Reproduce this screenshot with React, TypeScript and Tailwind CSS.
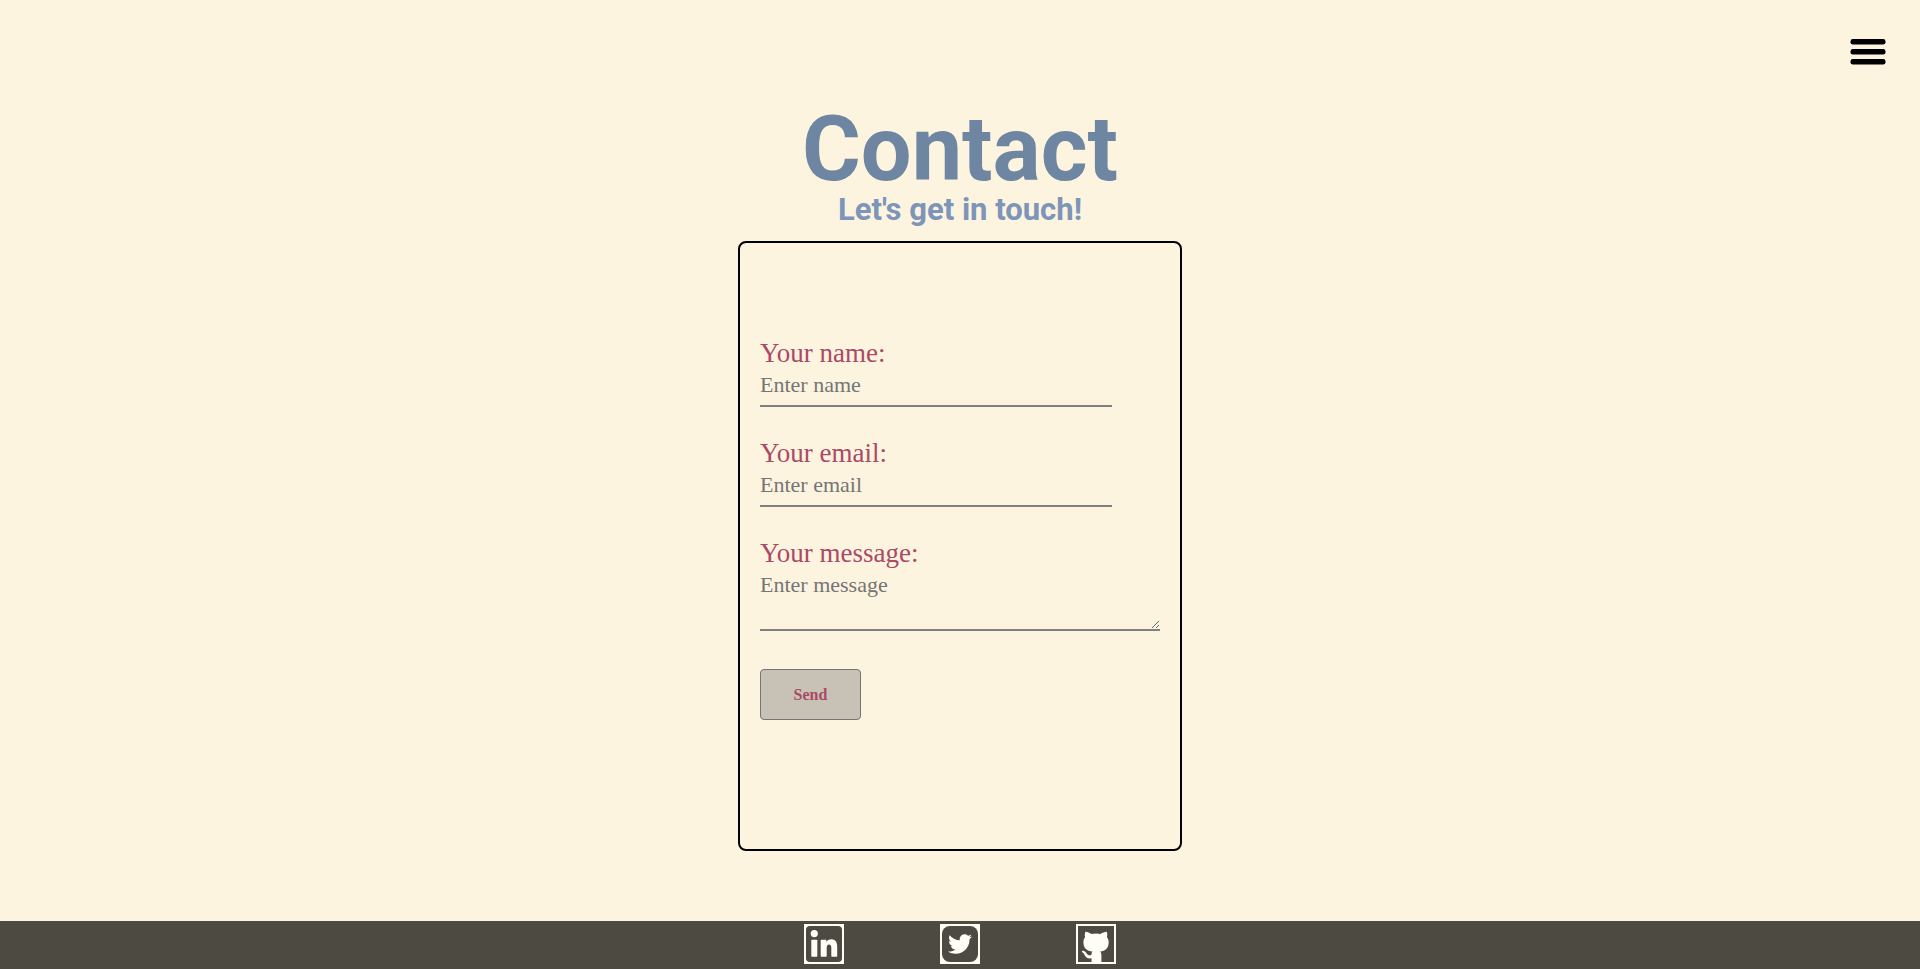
import type { ReactNode } from "react";
import { FaTwitter } from "react-icons/fa";

const serif = "font-['Liberation_Serif',serif]";
const fieldStyle =
  "block border-b-2 border-[#808080] bg-transparent text-[22px] text-[#444] placeholder:text-[#757575] outline-none";
const labelStyle = "text-[27px] leading-8 text-[#aa4a65]";

function SocialLink({ label, href, radius, children }: { label: string; href: string; radius: string; children: ReactNode }) {
  return (
    <a href={href} aria-label={label} className="block size-10 bg-[#fffdf5] p-0.5">
      <span className={`flex size-full items-center justify-center bg-[#4d4a42] text-[#fffdf5] ${radius}`}>{children}</span>
    </a>
  );
}

export default function App() {
  return (
    <div className="flex min-h-screen flex-col bg-[#fdf4e0]">
      <header className="flex justify-end px-8 pt-8">
        <button type="button" aria-label="Open menu" className="flex h-10 w-10 items-center justify-center">
          <svg width="36" height="26" viewBox="0 0 36 26" aria-hidden="true">
            <rect x="0.5" y="0" width="35" height="5.6" rx="2.4" />
            <rect x="0.5" y="10" width="35" height="5.6" rx="2.4" />
            <rect x="0.5" y="20" width="35" height="5.6" rx="2.4" />
          </svg>
        </button>
      </header>
      <main className="flex flex-1 flex-col items-center pt-[34px] font-[Roboto,sans-serif] font-bold">
        <h1 className="text-[90px] leading-[88px] text-[#6f86a3]">Contact</h1>
        <h2 className="text-[31px] leading-8 text-[#7d95b9]">Let's get in touch!</h2>
        <form
          onSubmit={(e) => e.preventDefault()}
          className={`mt-[15px] mb-[70px] flex w-full max-w-[444px] flex-1 flex-col items-start gap-[30px] rounded-lg border-2 border-black px-5 pt-[94px] pb-12 font-normal ${serif}`}
        >
          <div className="w-full">
            <label htmlFor="name" className={`block ${labelStyle}`}>Your name:</label>
            <input id="name" type="text" placeholder="Enter name" className={`${fieldStyle} h-[38px] w-[88%] pb-1`} />
          </div>
          <div className="w-full">
            <label htmlFor="email" className={`block ${labelStyle}`}>Your email:</label>
            <input id="email" type="email" placeholder="Enter email" className={`${fieldStyle} h-[38px] w-[88%] pb-1`} />
          </div>
          <div className="w-full">
            <label htmlFor="message" className={`block ${labelStyle}`}>Your message:</label>
            <textarea id="message" placeholder="Enter message" className={`${fieldStyle} h-[62px] w-full resize pt-0.5 leading-7`} />
          </div>
          <button
            type="submit"
            className="mt-2 h-[51px] w-[101px] rounded border border-[#757575] bg-[#c7c2b5] text-base font-bold text-[#aa4a65]"
          >
            Send
          </button>
        </form>
      </main>
      <footer className="flex h-12 items-start justify-center gap-24 bg-[#4d4a42] pt-[3px]">
        <SocialLink label="LinkedIn" href="#linkedin" radius="rounded">
          <svg width="36" height="36" viewBox="0 0 36 36" fill="currentColor" aria-hidden="true">
            <circle cx="8.3" cy="7.6" r="3.6" />
            <rect x="5.3" y="13.7" width="6" height="17" rx="0.6" />
            <path d="M15.3 13.7H20.3V16C21.4 14.3 23 13.3 25.2 13.3C29.6 13.3 31.2 16.3 31.2 20.7V30.1Q31.2 30.7 30.6 30.7H25.9Q25.3 30.7 25.3 30.1V21.8C25.3 19.8 24.8 18.4 23 18.4C21.3 18.4 20.7 19.8 20.7 21.8V30.1Q20.7 30.7 20.1 30.7H15.3Q14.7 30.7 14.7 30.1V14.3Q14.7 13.7 15.3 13.7Z" />
          </svg>
        </SocialLink>
        <SocialLink label="Twitter" href="#twitter" radius="rounded-lg">
          <FaTwitter size={24} />
        </SocialLink>
        <SocialLink label="GitHub" href="#github" radius="rounded-none">
          <svg width="36" height="36" viewBox="0 0 36 36" fill="currentColor" aria-hidden="true">
            <path d="M7.4 5.7C9.7 5.8 11.7 6.9 13.5 7.9C16.2 7.2 19.9 7.2 22.6 7.9C24.4 6.7 26.4 5.8 28.7 5.7C29.5 7.8 29.4 9.8 28.9 11.2C30.4 12.9 30.9 14.7 30.6 17.5C30.2 22.4 27.4 24.9 22.2 25.6C23.2 26.7 23.4 27.8 23.4 29.2V36H13.5V32.3C9.1 33 7.6 31 6.5 28.7C5.9 27.5 4.3 26.7 3.8 25C6.3 24.3 7.9 26.5 9 28C10.1 29.3 11.6 29.5 13.3 29C13.4 27.6 13.8 26.5 14.4 25.6C8.8 24.9 5.9 22.4 5.5 17.5C5.2 14.7 5.7 12.9 7.1 11.2C6.6 9.8 6.7 7.8 7.4 5.7Z" />
          </svg>
        </SocialLink>
      </footer>
    </div>
  );
}
